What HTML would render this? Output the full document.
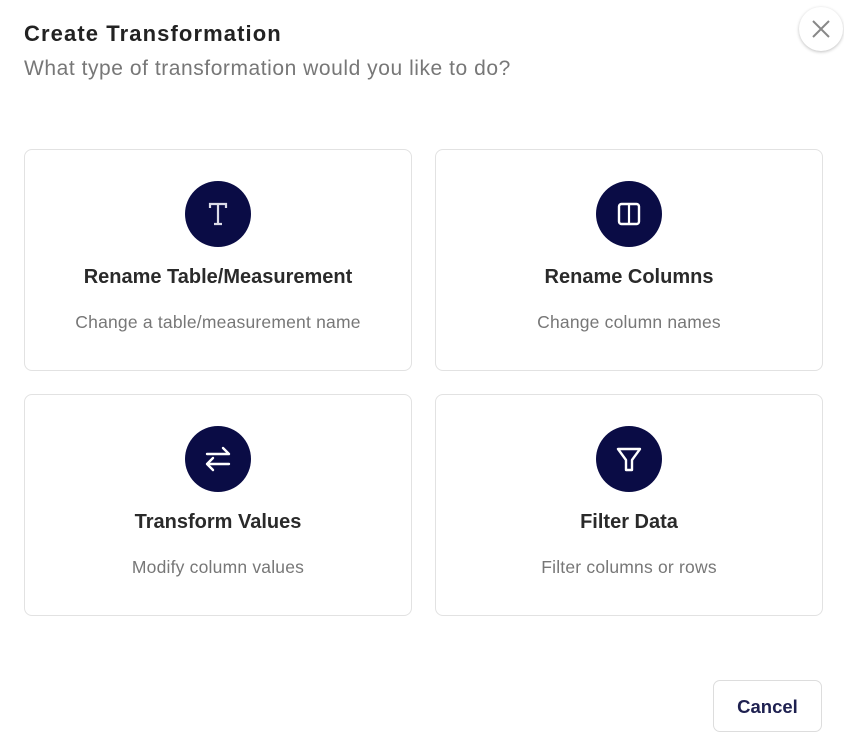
<!DOCTYPE html>
<html><head><meta charset="utf-8"><style>
html,body{margin:0;padding:0;width:844px;height:754px;background:#fff;overflow:hidden;font-family:"Liberation Sans",sans-serif;}
.t{position:absolute;left:24px;top:21px;font-size:22px;font-weight:bold;color:#222;letter-spacing:1.1px}
.s{position:absolute;left:24px;top:57px;font-size:21px;color:#777;letter-spacing:0.55px}
.x{position:absolute;left:799px;top:7px;width:44px;height:44px;border-radius:50%;background:#fff;box-shadow:0 1px 3px rgba(0,0,0,.25)}
.card{position:absolute;width:388px;height:222px;border:1px solid #e2e2e2;border-radius:8px;box-sizing:border-box;text-align:center}
.ic{position:absolute;left:160px;top:31px;width:66px;height:66px;border-radius:50%;background:#0a0c45}
.ic svg{position:absolute;left:17px;top:17px}
.h{position:absolute;left:0;right:0;top:116px;font-size:20px;font-weight:bold;color:#2a2a2a}
.d{position:absolute;left:0;right:0;top:162px;font-size:17.5px;color:#777;letter-spacing:0.2px}
.btn{position:absolute;left:713px;top:680px;width:109px;height:52px;border:1px solid #ddd;border-radius:7px;box-sizing:border-box;text-align:center;line-height:52px;font-size:18.5px;font-weight:bold;color:#1e2050}
</style></head><body>
<div class="t">Create Transformation</div>
<div class="s">What type of transformation would you like to do?</div>
<div class="x"><svg width="44" height="44" viewBox="0 0 44 44"><path d="M14 14L30 30M30 14L14 30" stroke="#888" stroke-width="2" fill="none"/></svg></div>

<div class="card" style="left:24px;top:149px"><div class="ic"><svg width="32" height="32" viewBox="0 0 32 32"><path d="M8 10V6H24V10M16 6V26M12 26H20" stroke="#dcdce8" stroke-width="2.2" fill="none"/></svg></div><div class="h">Rename Table/Measurement</div><div class="d">Change a table/measurement name</div></div>

<div class="card" style="left:435px;top:149px"><div class="ic"><svg width="32" height="32" viewBox="0 0 32 32"><rect x="6" y="6" width="20" height="20" rx="2.5" stroke="#fff" stroke-width="2.4" fill="none"/><path d="M16 6V26" stroke="#fff" stroke-width="2.2" /></svg></div><div class="h">Rename Columns</div><div class="d">Change column names</div></div>

<div class="card" style="left:24px;top:394px"><div class="ic"><svg width="32" height="32" viewBox="0 0 32 32"><path d="M5 11H27M21 5L27 11M27 21H5M11 15L5 21M11 27L5 21" stroke="#fff" stroke-width="2.4" fill="none" stroke-linecap="round"/></svg></div><div class="h">Transform Values</div><div class="d">Modify column values</div></div>

<div class="card" style="left:435px;top:394px"><div class="ic"><svg width="32" height="32" viewBox="0 0 32 32"><path d="M5 6H27L19 17V27H13V17Z" stroke="#fff" stroke-width="2.4" fill="none" stroke-linejoin="round"/></svg></div><div class="h">Filter Data</div><div class="d">Filter columns or rows</div></div>

<div class="btn">Cancel</div>
</body></html>
